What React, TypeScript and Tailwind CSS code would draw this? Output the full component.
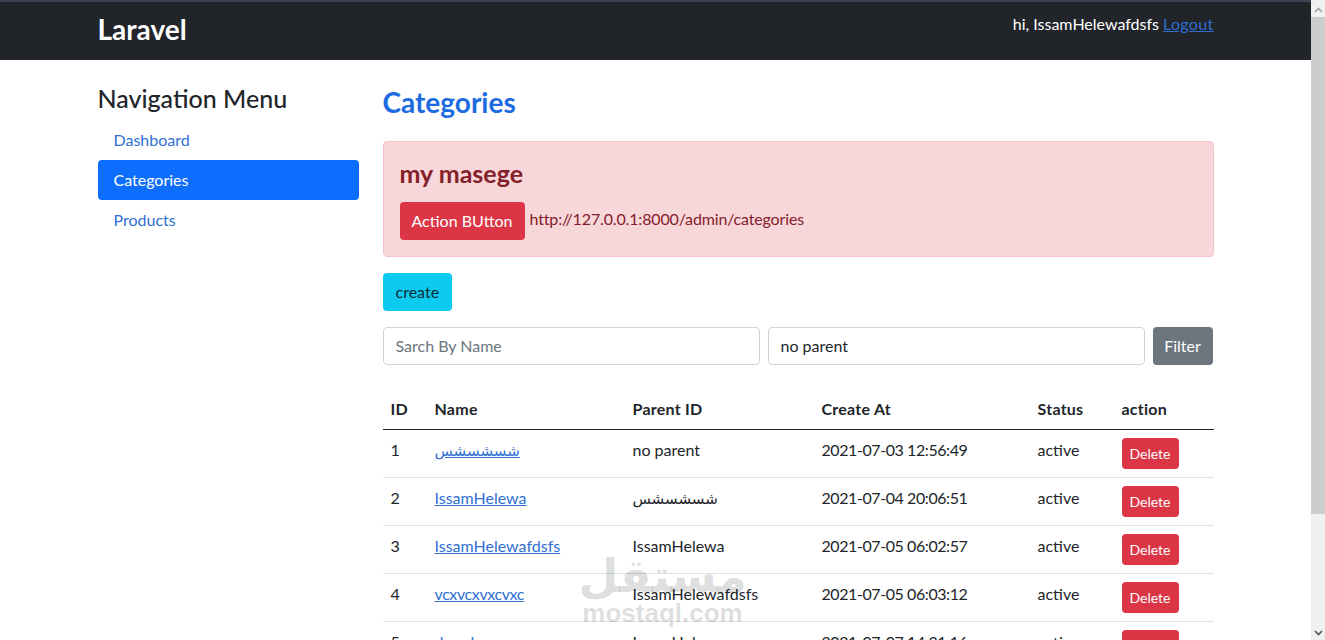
const rows = [
  { id: "1", name: "شسشسشس", parent: "no parent", date: "2021-07-03 12:56:49", nameClass: "text-[15px]", parentClass: "" },
  { id: "2", name: "IssamHelewa", parent: "شسشسشس", date: "2021-07-04 20:06:51", nameClass: "", parentClass: "text-[15px]" },
  { id: "3", name: "IssamHelewafdsfs", parent: "IssamHelewa", date: "2021-07-05 06:02:57", nameClass: "", parentClass: "" },
  { id: "4", name: "vcxvcxvxcvxc", parent: "IssamHelewafdsfs", date: "2021-07-05 06:03:12", nameClass: "tracking-[-0.4px]", parentClass: "" },
  { id: "5", name: "dsasdas", parent: "IssamHelewa", date: "2021-07-07 14:31:16", nameClass: "", parentClass: "" },
];

const App = () => {
  return (
    <div className="flex h-screen overflow-hidden bg-white text-[#212529] text-base font-['Lato','Noto_Sans','DejaVu_Sans',sans-serif]">
      <div className="flex-1 overflow-hidden relative">
        <header className="h-[60px] bg-[#212529] border-t-2 border-[#3b4450]">
          <div className="w-[1140px] mx-auto px-3 flex justify-between">
            <a className="text-white font-bold text-[28px] leading-[38px] mt-2">Laravel</a>
            <div className="text-white leading-6 mt-2.5">
              hi, IssamHelewafdsfs <a className="text-[#2f6fd2] underline tracking-[0.3px]">Logout</a>
            </div>
          </div>
        </header>

        <div className="w-[1140px] mx-auto px-3 flex gap-6 mt-6">
          <aside className="w-[261px] shrink-0">
            <h2 className="text-[25px] leading-[29px] font-medium mb-[7px]">Navigation Menu</h2>
            <nav className="flex flex-col">
              <a className="h-10 px-4 flex items-center text-[#2f6fd2]">Dashboard</a>
              <a className="h-10 px-4 flex items-center text-white bg-[#0d6efd] rounded">Categories</a>
              <a className="h-10 px-4 flex items-center text-[#2f6fd2]">Products</a>
            </nav>
          </aside>

          <main className="flex-1 min-w-0">
            <h1 className="text-[28px] leading-[36px] font-bold text-[#1d6be0] mb-[21px]">Categories</h1>

            <div className="h-[116px] bg-[#f8d7da] border border-[#f5c2c7] rounded text-[#842029] px-4 pt-[18px] mb-4">
              <h3 className="text-[25px] leading-[26px] font-bold mb-[16px]">my masege</h3>
              <div className="flex items-start gap-[5px]">
                <button className="h-[38px] px-3 rounded bg-[#dc3545] text-white">Action BUtton</button>
                <span className="leading-6 mt-[5px] tracking-[-0.15px]">http://127.0.0.1:8000/admin/categories</span>
              </div>
            </div>

            <button className="block h-[38px] px-[13px] rounded bg-[#0dcaf0] text-[#0b2b33] mb-4">create</button>

            <form className="flex gap-2 mb-[22px]">
              <div className="w-[377px] h-[38px] border border-[#ced4da] rounded px-3 flex items-center text-[#6c757d]">Sarch By Name</div>
              <div className="w-[377px] h-[38px] border border-[#ced4da] rounded px-3 flex items-center">no parent</div>
              <button type="button" className="w-[60px] h-[38px] rounded bg-[#6c757d] text-white">Filter</button>
            </form>

            <div>
              <div className="flex h-[43px] items-center pt-0.5 border-b border-[#212529] font-bold tracking-[0.25px]">
                <div className="w-[52px] pl-2">ID</div>
                <div className="w-[198px]">Name</div>
                <div className="w-[189px]">Parent ID</div>
                <div className="w-[216px]">Create At</div>
                <div className="w-[84px]">Status</div>
                <div className="flex-1">action</div>
              </div>
              {rows.map((row) => (
                <div key={row.id} className="flex h-12 border-b border-[#dee2e6] pt-2">
                  <div className="w-[52px] pl-2 leading-6">{row.id}</div>
                  <div className={`w-[198px] leading-6 ${row.nameClass}`}>
                    <a className="text-[#2f6fd2] underline">{row.name}</a>
                  </div>
                  <div className={`w-[189px] leading-6 ${row.parentClass}`}>{row.parent}</div>
                  <div className="w-[216px] leading-6 tracking-[-0.42px]">{row.date}</div>
                  <div className="w-[84px] leading-6">active</div>
                  <div className="flex-1">
                    <button className="h-[31px] w-[57px] rounded bg-[#dc3545] text-white text-sm">Delete</button>
                  </div>
                </div>
              ))}
            </div>
          </main>
        </div>

        <div className="absolute left-[580px] top-[551px] w-[165px] flex flex-col items-center text-[#000000]/15 pointer-events-none font-['DejaVu_Sans',sans-serif] font-bold">
          <span className="text-[46px] leading-[50px]">مستقل</span>
          <span className="text-[26px] leading-6 font-['Liberation_Sans',sans-serif]">mostaql.com</span>
        </div>
      </div>

      <div className="w-[14px] shrink-0 flex flex-col bg-[#f0f0f0] pt-[2px]">
        <div className="h-[15px] flex items-center justify-center">
          <svg width="9" height="6" viewBox="0 0 9 6" fill="none" stroke="#a3a3a3" strokeWidth="1.6"><path d="M1 5l3.5-3.5L8 5" /></svg>
        </div>
        <div className="h-[497px] bg-[#cdcdcd]" />
        <div className="flex-1" />
        <div className="h-[15px] flex items-center justify-center">
          <svg width="9" height="6" viewBox="0 0 9 6" fill="none" stroke="#505050" strokeWidth="1.6"><path d="M1 1l3.5 3.5L8 1" /></svg>
        </div>
      </div>
    </div>
  );
};

export default App;
